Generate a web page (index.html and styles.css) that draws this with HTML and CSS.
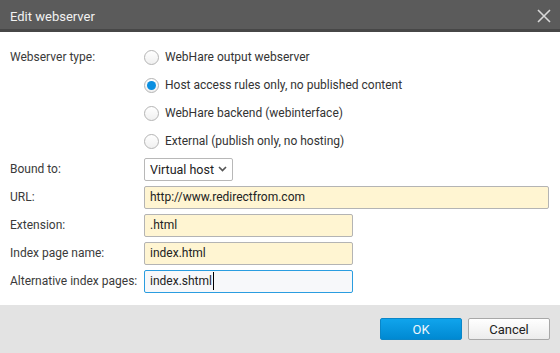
FILE: index.html
```html
<!DOCTYPE html>
<html lang="en">
<head>
    <meta charset="UTF-8">
    <title>Edit webserver</title>
    <link rel="stylesheet" href="styles.css">
</head>
<body>
    <div class="dialog">
        <div class="titlebar">
            <span class="title">Edit webserver</span>
            <svg class="close" width="14" height="14" viewBox="0 0 14 14">
                <path d="M1 1 L13 13 M13 1 L1 13" stroke="#d8d8d8" stroke-width="1.6" fill="none"/>
            </svg>
        </div>

        <div class="form">
            <div class="label">Webserver type:</div>
            <div class="radio"><span class="dot"></span>WebHare output webserver</div>

            <div class="label"></div>
            <div class="radio"><span class="dot checked"></span>Host access rules only, no published content</div>

            <div class="label"></div>
            <div class="radio"><span class="dot"></span>WebHare backend (webinterface)</div>

            <div class="label"></div>
            <div class="radio"><span class="dot"></span>External (publish only, no hosting)</div>

            <div class="label">Bound to:</div>
            <div class="cell">
                <div class="select">Virtual host
                    <svg width="9" height="6" viewBox="0 0 9 6"><path d="M1 1 L4.5 4.5 L8 1" stroke="#555" stroke-width="1.7" fill="none"/></svg>
                </div>
            </div>

            <div class="label">URL:</div>
            <div class="cell"><div class="field wide">http://www.redirectfrom.com</div></div>

            <div class="label">Extension:</div>
            <div class="cell"><div class="field">.html</div></div>

            <div class="label">Index page name:</div>
            <div class="cell"><div class="field">index.html</div></div>

            <div class="label">Alternative index pages:</div>
            <div class="cell"><div class="field focused">index.shtml<span class="caret"></span></div></div>
        </div>

        <div class="footer">
            <button class="btn ok">OK</button>
            <button class="btn cancel">Cancel</button>
        </div>
    </div>
</body>
</html>
```

FILE: styles.css
```css
body {
    margin: 0;
    font-family: Roboto, "Liberation Sans", sans-serif;
    font-size: 12px;
    color: #333;
    background-color: #fff;
}

.dialog {
    width: 560px;
    height: 353px;
    display: flex;
    flex-direction: column;
}

.titlebar {
    height: 29px;
    background-color: #5b5b5b;
    border-bottom: 3px solid #474747;
    display: flex;
    align-items: center;
    justify-content: space-between;
    padding: 0 9px 0 10px;
}

.title {
    color: #f2f2f2;
    font-size: 13px;
    padding-top: 3px;
}

.close {
    margin-top: 3px;
}

.form {
    flex: 1;
    display: grid;
    grid-template-columns: 134px 1fr;
    grid-auto-rows: 28px;
    padding: 11px 10px 0 10px;
}

.label,
.radio,
.cell {
    display: flex;
    align-items: center;
}

.label {
    white-space: nowrap;
    color: #3a3a3a;
}

.dot {
    width: 13px;
    height: 13px;
    border: 1px solid #b4b4b4;
    border-radius: 50%;
    background: linear-gradient(#fff, #f0f0f0);
    margin-right: 6px;
    position: relative;
    flex-shrink: 0;
}

.dot.checked::after {
    content: "";
    position: absolute;
    left: 2px;
    top: 2px;
    width: 9px;
    height: 9px;
    border-radius: 50%;
    background-color: #0b8fe0;
}

.select {
    height: 21px;
    width: 82px;
    border: 1px solid #b8b8b8;
    border-radius: 2px;
    background: #fff;
    display: flex;
    align-items: center;
    padding-left: 5px;
    gap: 4px;
    color: #222;
    font-size: 12.5px;
}

.field {
    height: 21px;
    width: 201px;
    border: 1px solid #b4b4b4;
    border-radius: 2px;
    background-color: #fff5d2;
    display: flex;
    align-items: center;
    padding-left: 5px;
    padding-right: 1px;
    color: #222;
    font-size: 12px;
}

.field.wide {
    width: 397px;
}

.field.focused {
    border-color: #2a9de0;
    background-color: #f7f8fa;
}

.caret {
    display: inline-block;
    width: 1px;
    height: 18px;
    background-color: #000;
    margin-left: 1px;
}

.footer {
    height: 48px;
    background-color: #e3e3e3;
    display: flex;
    justify-content: flex-end;
    align-items: flex-start;
    padding: 13px 10px 0 0;
    box-sizing: border-box;
    gap: 6px;
}

.btn {
    width: 82px;
    height: 22px;
    font-family: Roboto, "Liberation Sans", sans-serif;
    font-size: 13px;
    border-radius: 2px;
    cursor: pointer;
}

.btn.ok {
    background: linear-gradient(#10a4ec, #0089d2);
    border: 1px solid #0a86c8;
    color: #eef6fc;
}

.btn.cancel {
    background: linear-gradient(#fff, #ececec);
    border: 1px solid #a8a8a8;
    color: #222;
}
```
